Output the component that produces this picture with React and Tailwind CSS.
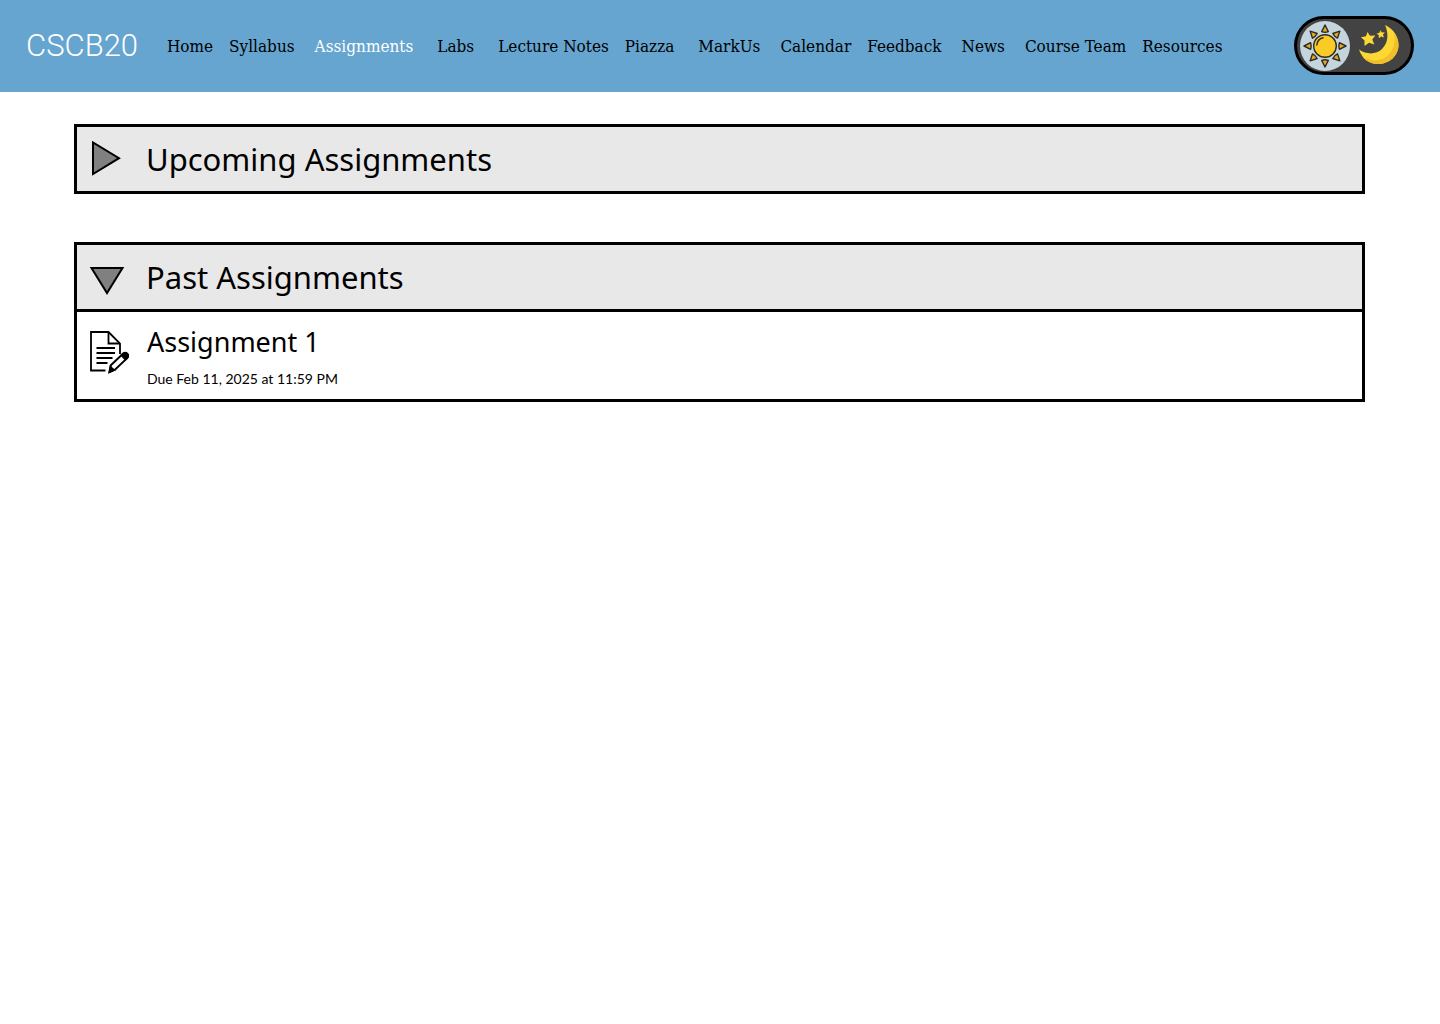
import { useState } from "react";

const links = [
  { label: "Home", space: "pr-4" },
  { label: "Syllabus", space: "pr-5" },
  { label: "Assignments", space: "pr-6", current: true },
  { label: "Labs", space: "pr-6" },
  { label: "Lecture Notes", space: "pr-4" },
  { label: "Piazza", space: "pr-6" },
  { label: "MarkUs", space: "pr-5" },
  { label: "Calendar", space: "pr-4" },
  { label: "Feedback", space: "pr-5" },
  { label: "News", space: "pr-5" },
  { label: "Course Team", space: "pr-4" },
  { label: "Resources", space: "" },
];

const rays = [0, 45, 90, 135, 180, 225, 270, 315];

function Sun() {
  return (
    <svg viewBox="0 0 50 50" className="size-[50px]" aria-hidden="true">
      <circle cx="25" cy="25" r="25" fill="#c5d5dd" />
      <g stroke="#2d2a26" strokeWidth="1.4" strokeLinejoin="round">
        {rays.map((angle) => (
          <path
            key={angle}
            d="M25 4 L28.3 10.600 Q25 11.800 21.700 10.600 Z"
            fill="#e3ab1c"
            transform={`rotate(${angle} 25 25)`}
          />
        ))}
        <circle cx="25" cy="25" r="11.3" fill="#fbcb25" />
        <path d="M16.8 24 Q17.6 18 23 16.8" fill="none" strokeLinecap="round" />
      </g>
    </svg>
  );
}

function Moon() {
  return (
    <svg viewBox="0 0 42 42" className="size-[42px]" aria-hidden="true">
      <path
        d="M27 0 C36 4 40.500 12 40.500 20 C40.500 31 31 39 20 39 C11 39 4 33.500 1 24.500 C8 29.500 18 30 24 24 C30 18 31 9 27 0 Z"
        fill="#fdd835"
      />
      <path
        d="M36 8 C39 11.500 40.500 16 40.500 20 C40.500 31 31 39 20 39 C13 39 7.500 35.800 4 31 C14 38 26 36 32 28 C36.500 22 37.500 15 36 8 Z"
        fill="#f2bf2b"
      />
      <path
        d="M9.500 7 L12 10.800 L17.300 10.500 L14.300 14.500 L16.300 19.500 L11 17.800 L6.500 21 L6.500 15.500 L3 12.300 L8 11.200 Z"
        fill="#fdd835"
      />
      <path
        d="M22.300 5.200 L23.800 7.600 L26.800 7.300 L24.900 9.700 L26.100 12.500 L23.200 11.500 L20.800 13.300 L20.800 10.300 L18.500 8.500 L21.300 7.900 Z"
        fill="#fdd835"
      />
    </svg>
  );
}

function ThemeSwitch() {
  const [dark, setDark] = useState(false);
  return (
    <button
      type="button"
      role="switch"
      aria-checked={dark}
      aria-label="Dark mode"
      onClick={() => setDark(!dark)}
      className="flex h-[59px] w-[120px] shrink-0 items-center gap-2 rounded-full border-3 border-black bg-[#434343] pl-[3px]"
    >
      <Sun />
      <Moon />
    </button>
  );
}

function Triangle({ open }) {
  return (
    <svg viewBox="0 0 36 36" className="size-9 shrink-0" aria-hidden="true">
      <path
        d={open ? "M2.500 9 H33.500 L18 34 Z" : "M4 1.500 V33 L30 17.200 Z"}
        fill="#808080"
        stroke="#000"
        strokeWidth="2"
      />
    </svg>
  );
}

function AssignmentIcon() {
  return (
    <svg viewBox="0 0 40 44" className="h-11 w-10 shrink-0" fill="none" stroke="#000" strokeWidth="1.800" aria-hidden="true">
      <path d="M16.500 40.500 H2 V2 H19.500 L31 13.500 V24" />
      <path d="M19.500 2 V13.500 H31" />
      <path d="M7.500 18 H26 M7.500 23 H26 M7.500 28 H23.500 M7.500 33 H18.500" />
      <path d="M20.500 42 L21.800 35.200 L34.200 23.600 Q36.500 22 38.300 23.900 Q40 26 38.100 28.100 L26 39.700 Z" fill="#fff" strokeWidth="2" />
      <path d="M32.500 25.200 L34.200 23.600 Q36.500 22 38.300 23.900 Q40 26 38.100 28.100 L36.500 29.600 Z" fill="#000" />
      <path d="M20.500 42 L21.500 37 L25 40 Z" fill="#000" />
    </svg>
  );
}

function Section({ title, initiallyOpen, children }) {
  const [open, setOpen] = useState(initiallyOpen);
  return (
    <section className="border-3 border-black">
      <h2>
        <button
          type="button"
          aria-expanded={open}
          onClick={() => setOpen(!open)}
          className="flex h-16 w-full items-center gap-[21px] bg-[#e8e8e8] pl-3 text-left font-['Noto_Sans',sans-serif] text-[31px] leading-10"
        >
          <Triangle open={open} />
          {title}
        </button>
      </h2>
      {open && children}
    </section>
  );
}

export default function App() {
  return (
    <div className="bg-white text-black">
      <header className="flex min-h-[92px] items-center bg-[#65a5d0] px-[26px] pb-px">
        <a href="#" className="w-[141px] shrink-0 font-['Roboto',sans-serif] text-[31px] leading-10 font-light text-white">
          CSCB20
        </a>
        <nav aria-label="Main" className="flex-1">
          <ul className="flex font-['DejaVu_Serif_Condensed','DejaVu_Serif',serif] text-[17px] leading-6 whitespace-nowrap">
            {links.map(({ label, space, current }) => (
              <li key={label} className={space}>
                <a href="#" aria-current={current ? "page" : undefined} className={current ? "text-white" : "text-black"}>
                  {label}
                </a>
              </li>
            ))}
          </ul>
        </nav>
        <ThemeSwitch />
      </header>
      <main className="flex flex-col gap-12 pt-8 pr-[75px] pl-[74px]">
        <Section title="Upcoming Assignments" initiallyOpen={false} />
        <Section title="Past Assignments" initiallyOpen={true}>
          <article className="flex items-start gap-[18px] border-t-3 border-black px-3 pt-3 pb-2">
            <div className="pt-[6px]">
              <AssignmentIcon />
            </div>
            <div>
              <h3 className="font-['Noto_Sans',sans-serif] text-[27px] leading-9">Assignment 1</h3>
              <p className="pt-[7px] font-['Lato',sans-serif] text-sm leading-6">Due Feb 11, 2025 at 11:59 PM</p>
            </div>
          </article>
        </Section>
      </main>
    </div>
  );
}
